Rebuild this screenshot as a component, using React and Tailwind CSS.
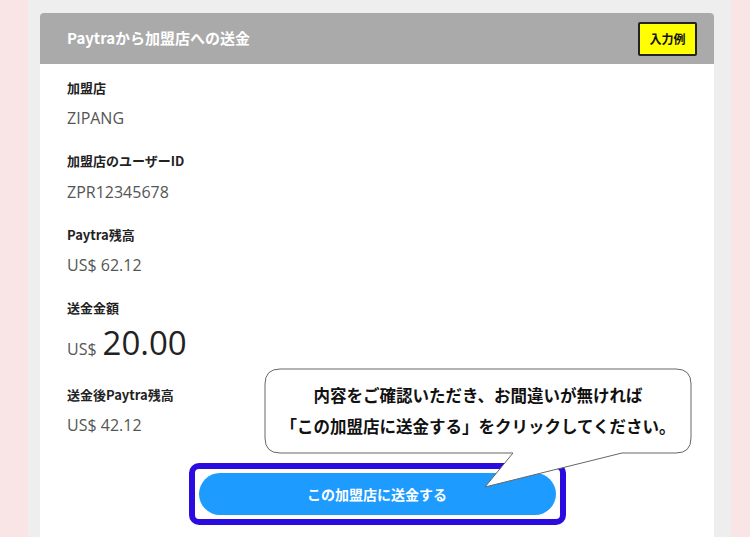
const jp = { fontFamily: '"Noto Sans CJK JP", "Noto Sans", sans-serif' };
const num = { fontFamily: '"Open Sans", "Noto Sans CJK JP", sans-serif' };

const Label = ({ children, className = '' }) => (
  <div className={`text-[13px] font-bold leading-[20px] text-[#222] ${className}`}>{children}</div>
);

const Value = ({ children, className = '' }) => (
  <div className={`text-[16px] leading-[20px] text-[#555] ${className}`} style={num}>{children}</div>
);

// 吹き出し（説明用）
const Bubble = () => (
  <div className="absolute left-[224px] top-[355px] w-[428px] h-[122px]">
    <svg width="428" height="122" className="absolute inset-0">
      <path
        d="M16,1 H412 Q427,1 427,16 V70 Q427,85 412,85 H358 L221,119 L249,85 H16 Q1,85 1,70 V16 Q1,1 16,1 Z"
        fill="#fff"
        stroke="#666"
        strokeWidth="1"
      />
    </svg>
    <div className="relative h-[86px] flex flex-col items-center justify-center text-[16.5px] font-semibold text-[#111] leading-[31px]" style={jp}>
      <div>内容をご確認いただき、お間違いが無ければ</div>
      <div>「この加盟店に送金する」をクリックしてください。</div>
    </div>
  </div>
);

export default function App() {
  return (
    <div className="w-[750px] h-[537px] overflow-hidden bg-[#f9e5e5] pl-[28px]" style={jp}>
      <div className="w-[703px] h-full bg-[#eeeeee] pl-[12px] pt-[13px]">
        <div className="relative w-[674px] h-[600px] bg-white rounded-t-[4px]">
          {/* ヘッダー */}
          <div className="h-[51px] bg-[#aaaaaa] rounded-t-[4px] flex items-center justify-between pl-[27px] pr-[17px]">
            <div className="text-[15px] font-bold text-white">Paytraから加盟店への送金</div>
            <div className="w-[59px] h-[34px] bg-[#ffff00] border-2 border-[#222] rounded-[2px] flex items-center justify-center text-[12px] font-bold text-[#111]">
              入力例
            </div>
          </div>

          {/* 内容 */}
          <div className="pl-[27px] pt-[14px]">
            <Label>加盟店</Label>
            <Value className="mt-[10px]">ZIPANG</Value>
            <Label className="mt-[23px]">加盟店のユーザーID</Label>
            <Value className="mt-[11px]">ZPR12345678</Value>
            <Label className="mt-[23px]">Paytra残高</Label>
            <Value className="mt-[10px]">US$ 62.12</Value>
            <Label className="mt-[23px]">送金金額</Label>
            <div className="mt-[7px] h-[36px] flex items-baseline gap-[6px]" style={num}>
              <span className="text-[16px] text-[#555]">US$</span>
              <span className="text-[33px] leading-[36px] text-[#222]">20.00</span>
            </div>
            <Label className="mt-[24px]">送金後Paytra残高</Label>
            <Value className="mt-[10px]">US$ 42.12</Value>
          </div>

          <div className="mt-[28px] flex justify-center">
            <div className="w-[377px] border-[6px] border-[#2a0be0] rounded-[10px] p-[4px] bg-white">
              <button className="w-full h-[42px] rounded-full bg-[#1e9bff] text-white text-[14px] font-bold">
                この加盟店に送金する
              </button>
            </div>
          </div>

          <Bubble />
        </div>
      </div>
    </div>
  );
}
